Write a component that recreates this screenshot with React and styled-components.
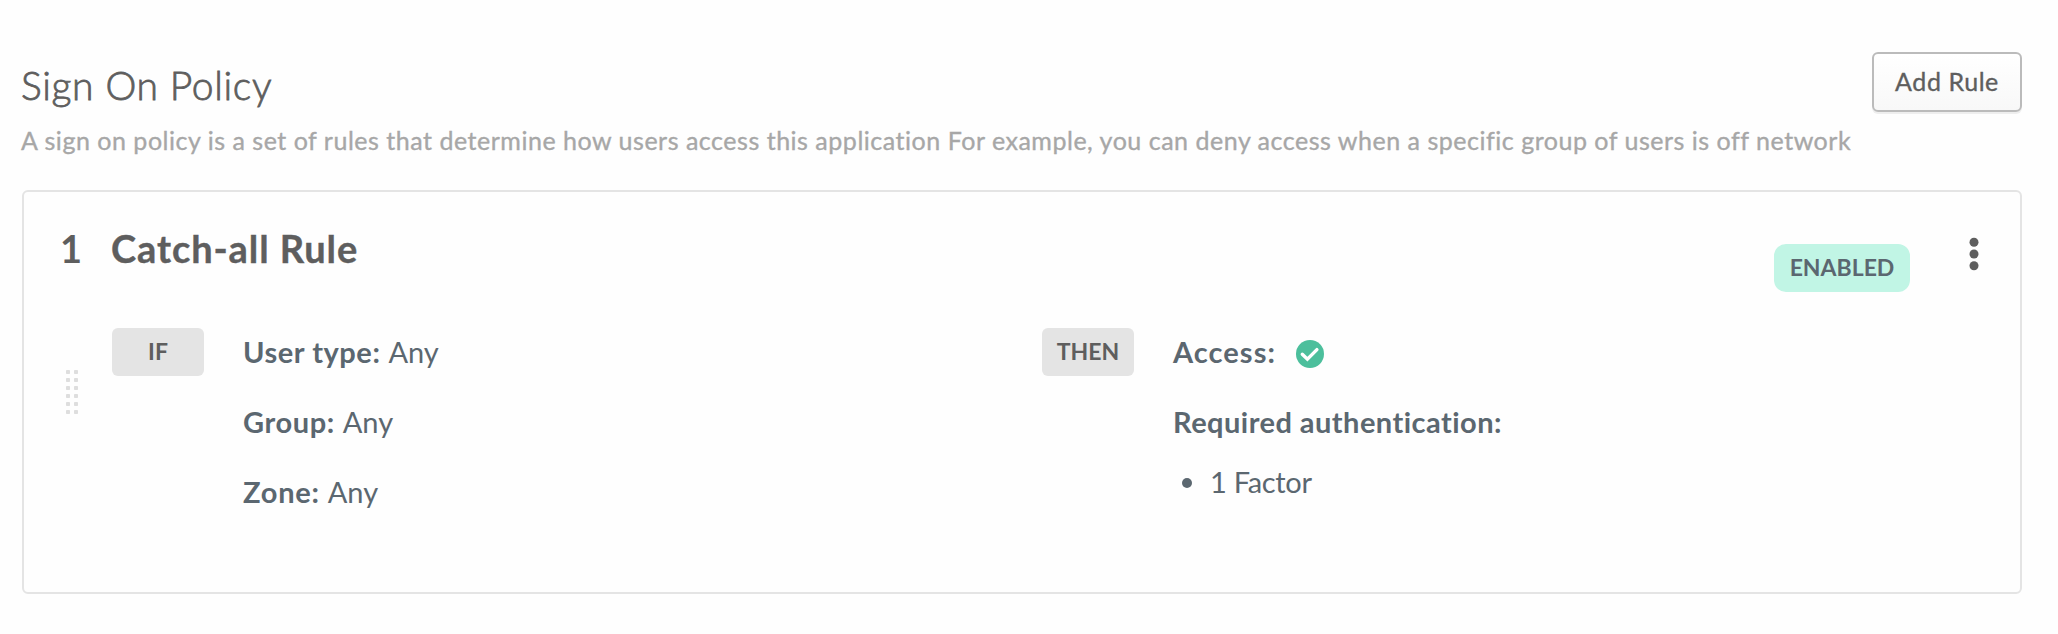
import React from "react";
import styled, { createGlobalStyle } from "styled-components";

const GlobalStyle = createGlobalStyle`
  *, *::before, *::after { box-sizing: border-box; }
  body { margin: 0; background: #fefefe; font-family: Lato, "Open Sans", sans-serif; color: #5e5e5e; }
`;

const Page = styled.main`
  padding: 52px 36px 40px 22px;
  height: 634px;
`;

const Header = styled.header`
  display: flex;
  justify-content: space-between;
  align-items: flex-start;
  height: 138px;
`;

const Heading = styled.div`
  padding-top: 9px;
  width: 1840px;
  flex: none;
  white-space: nowrap;
`;

const Title = styled.h1`
  margin: 0 0 0 -1px;
  font-size: 39px;
  line-height: 48px;
  font-weight: 300;
  letter-spacing: 0.65px;
  -webkit-text-stroke: 0.8px #5e5e5e;
`;

const Description = styled.p`
  margin: 15px 0 0 -1px;
  font-size: 25px;
  line-height: 32px;
  letter-spacing: 0.518px;
  color: #a7a7a7;
  -webkit-text-stroke: 0.35px #a7a7a7;
`;

const Button = styled.button`
  flex: none;
  width: 150px;
  height: 60px;
  padding: 0 0 3px;
  border: 2px solid #bbb;
  border-radius: 6px;
  background: linear-gradient(#fff, #f8f8f8);
  box-shadow: 0 2px 0 #eee;
  font: 400 25px Lato, sans-serif;
  letter-spacing: 0.57px;
  color: #5e5e5e;
  -webkit-text-stroke: 0.35px #5e5e5e;
`;

const Card = styled.section`
  height: 404px;
  padding: 31px 41px 0 36px;
  border: 2px solid #e4e4e4;
  border-radius: 6px;
`;

const CardHeader = styled.div`
  display: flex;
  align-items: flex-start;
  height: 105px;
`;

const Priority = styled.span`
  width: 51px;
  padding-top: 1px;
  font-size: 38px;
  line-height: 48px;
  font-weight: 700;
`;

const RuleName = styled.h2`
  margin: 0;
  padding-top: 1px;
  flex: 1;
  font-size: 38px;
  line-height: 48px;
  font-weight: 700;
  letter-spacing: 0.92px;
  -webkit-text-stroke: 0.4px #5e5e5e;
`;

const Status = styled.span`
  width: 136px;
  height: 48px;
  margin: 21px 59px 0 0;
  border-radius: 12px;
  background: #c1f5e5;
  color: #5b6770;
  font-size: 23px;
  line-height: 47px;
  font-weight: 700;
  text-align: center;
`;

const MenuIcon = styled.svg`
  width: 10px;
  height: 34px;
  margin-top: 14px;
`;

const CardBody = styled.div`
  display: flex;
  align-items: flex-start;
`;

const Handle = styled.svg`
  flex: none;
  width: 14px;
  height: 46px;
  margin: 41px 33px 0 5px;
`;

const Clause = styled.div`
  display: flex;
  align-items: flex-start;
  flex: ${(p) => (p.$width ? `0 0 ${p.$width}px` : "1")};
`;

const Keyword = styled.span`
  width: 92px;
  height: 48px;
  margin-right: 39px;
  border-radius: 6px;
  background: #e4e4e4;
  font-size: 23px;
  line-height: 47px;
  font-weight: 700;
  text-align: center;
`;

const Conditions = styled.div`
  display: flex;
  flex-direction: column;
  gap: 30px;
  padding-top: 4px;
  color: #5b6770;
  font-size: 29px;
  line-height: 40px;
`;

const Condition = styled.div`
  display: flex;
  align-items: center;
  height: 40px;
  white-space: nowrap;
`;

const Label = styled.strong`
  margin-right: ${(p) => p.$gap || 8}px;
  font-weight: 700;
  letter-spacing: ${(p) => p.$tracking}px;
`;

const CheckIcon = styled.svg`
  width: 28px;
  height: 28px;
  margin-top: 4px;
`;

const Factors = styled.ul`
  display: flex;
  flex-direction: column;
  margin: -10px 0 0;
  padding: 0;
  list-style: none;
`;

const Factor = styled.li`
  display: flex;
  align-items: center;
  letter-spacing: -0.3px;

  &::before {
    content: "";
    width: 10px;
    height: 10px;
    margin: 2px 18px 0 9px;
    border-radius: 50%;
    background: #5b6770;
  }
`;

const conditions = [
  { label: "User type:", tracking: 0.55 },
  { label: "Group:", tracking: 0.6 },
  { label: "Zone:", tracking: 0.77 },
];

export default function App() {
  return (
    <>
      <GlobalStyle />
      <Page>
        <Header>
          <Heading>
            <Title>Sign On Policy</Title>
            <Description>
              A sign on policy is a set of rules that determine how users access this application For
              example, you can deny access when a specific group of users is off network
            </Description>
          </Heading>
          <Button type="button">Add Rule</Button>
        </Header>
        <Card>
          <CardHeader>
            <Priority>1</Priority>
            <RuleName>Catch-all Rule</RuleName>
            <Status>ENABLED</Status>
            <MenuIcon viewBox="0 0 10 34" fill="#5e5e5e" aria-label="Rule actions">
              {[5.3, 17, 28.7].map((y) => (
                <circle key={y} cx="5" cy={y} r="4.5" />
              ))}
            </MenuIcon>
          </CardHeader>
          <CardBody>
            <Handle viewBox="0 0 14 46" fill="#dedede">
              {[0, 1, 2, 3, 4, 5].map((row) =>
                [1, 9].map((x) => (
                  <rect key={`${row}-${x}`} x={x} y={1 + row * 8} width="4" height="4" rx="0.8" />
                ))
              )}
            </Handle>
            <Clause $width={930}>
              <Keyword>IF</Keyword>
              <Conditions>
                {conditions.map(({ label, tracking }) => (
                  <Condition key={label}>
                    <Label $tracking={tracking}>{label}</Label>
                    <span>Any</span>
                  </Condition>
                ))}
              </Conditions>
            </Clause>
            <Clause>
              <Keyword>THEN</Keyword>
              <Conditions>
                <Condition>
                  <Label $tracking={1.05} $gap={20}>Access:</Label>
                  <CheckIcon viewBox="0 0 28 28" aria-label="Allowed">
                    <circle cx="14" cy="14" r="14" fill="#4cbf9c" />
                    <path
                      d="M6.3 14.2 L11.4 19.2 L20.9 9.6"
                      fill="none"
                      stroke="#fff"
                      strokeWidth="3.4"
                      strokeLinecap="round"
                    />
                  </CheckIcon>
                </Condition>
                <Condition>
                  <Label $tracking={0.46}>Required authentication:</Label>
                </Condition>
                <Factors>
                  <Factor>1 Factor</Factor>
                </Factors>
              </Conditions>
            </Clause>
          </CardBody>
        </Card>
      </Page>
    </>
  );
}
